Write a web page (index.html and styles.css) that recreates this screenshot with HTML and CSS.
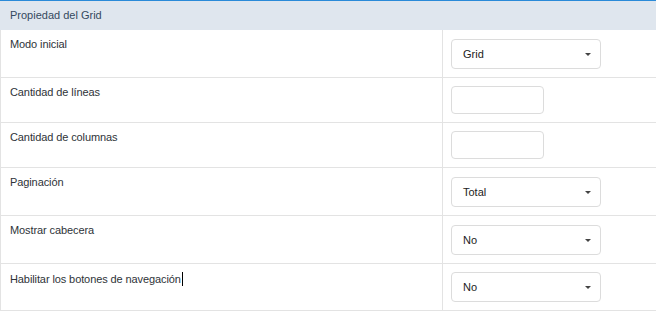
FILE: index.html
```html
<!DOCTYPE html>
<html lang="es">
<head>
  <meta charset="UTF-8" />
  <title>Propiedad del Grid</title>
  <link rel="stylesheet" href="styles.css">
</head>
<body>
  <div class="panel">
    <div class="panel-heading">Propiedad del Grid</div>
    <table class="props">
      <tr class="row-select">
        <td class="label">Modo inicial</td>
        <td class="value"><div class="select">Grid<span class="caret"></span></div></td>
      </tr>
      <tr class="row-input">
        <td class="label">Cantidad de líneas</td>
        <td class="value"><div class="input"></div></td>
      </tr>
      <tr class="row-input">
        <td class="label">Cantidad de columnas</td>
        <td class="value"><div class="input"></div></td>
      </tr>
      <tr class="row-select">
        <td class="label">Paginación</td>
        <td class="value"><div class="select">Total<span class="caret"></span></div></td>
      </tr>
      <tr class="row-select">
        <td class="label">Mostrar cabecera</td>
        <td class="value"><div class="select">No<span class="caret"></span></div></td>
      </tr>
      <tr class="row-select last">
        <td class="label">Habilitar los botones de navegación<span class="cursor"></span></td>
        <td class="value"><div class="select">No<span class="caret"></span></div></td>
      </tr>
    </table>
  </div>
</body>
</html>
```
FILE: styles.css
```css
html, body {
  margin: 0;
  padding: 0;
  background: #fff;
}
body {
  font-family: "Liberation Sans", Arial, sans-serif;
  font-size: 11px;
  color: #333;
}
.panel {
  width: 656px;
  border-top: 1px solid #2a8ad8;
}
.panel-heading {
  height: 29px;
  line-height: 29px;
  padding-left: 10px;
  background: #dfe6ee;
  color: #34495e;
}
.props {
  width: 100%;
  border-collapse: collapse;
  border-left: 1px solid #e3e3e3;
}
.props td {
  vertical-align: top;
  border-bottom: 1px solid #e3e3e3;
  padding: 0;
}
.props td.label {
  width: 423px;
  padding: 8px 9px;
  border-right: 1px solid #e3e3e3;
  color: #2e3338;
  letter-spacing: -0.1px;
}
.row-select td.value {
  padding: 9px 8px 8px;
}
.row-select.last td.value {
  padding: 8px 8px 8px;
}
.row-input td.value {
  padding: 8px 8px;
}
.select {
  position: relative;
  box-sizing: border-box;
  width: 150px;
  height: 30px;
  line-height: 28px;
  padding-left: 11px;
  border: 1px solid #dcdcdc;
  border-radius: 4px;
  color: #222;
}
.caret {
  position: absolute;
  right: 9px;
  top: 13px;
  width: 0;
  height: 0;
  border-left: 3px solid transparent;
  border-right: 3px solid transparent;
  border-top: 3px solid #444;
}
.input {
  box-sizing: border-box;
  width: 93px;
  height: 28px;
  border: 1px solid #dcdcdc;
  border-radius: 4px;
}
.cursor {
  display: inline-block;
  width: 1px;
  height: 14px;
  margin-left: 1px;
  vertical-align: -3px;
  background: #000;
}
```
